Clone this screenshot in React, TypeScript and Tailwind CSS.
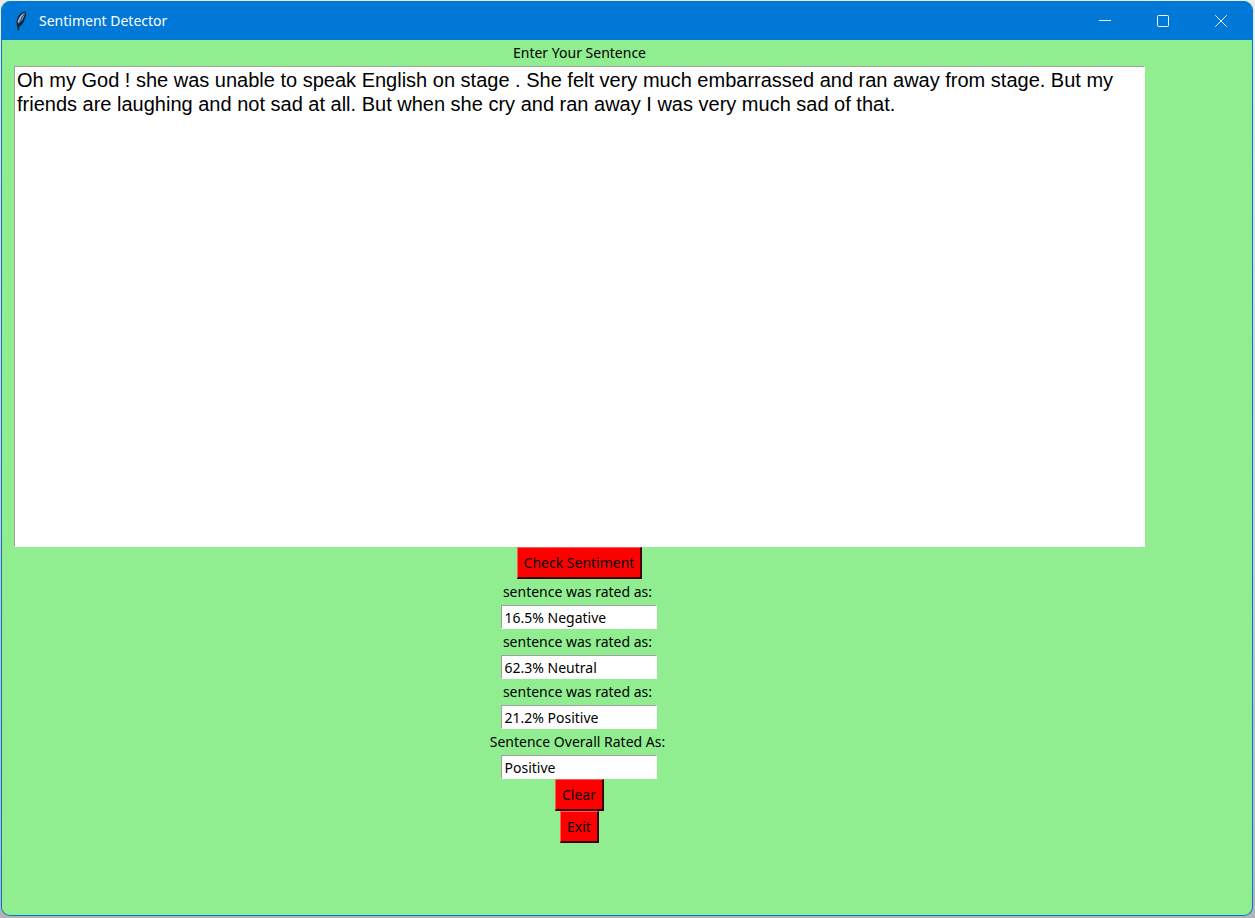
import { useState } from "react";
import type { InputHTMLAttributes, ButtonHTMLAttributes } from "react";

const SENTENCE =
  "Oh my God ! she was unable to speak English on stage . She felt very much embarrassed and ran away from stage. But my friends are laughing and not sad at all. But when she cry and ran away I was very much sad of that.";

function FeatherIcon() {
  return (
    <svg width="14" height="20" viewBox="0 0 14 20" aria-hidden="true">
      <path d="M11.500 0.300C7.500 1 4 4.500 3 8.500c-.6 2.400-.6 4.700.2 6.700L3.800 19.500h1.200l.4-3.800C8.300 14 9.800 11.500 10.300 9c1.400-2.500 2-6 1.200-8.700z" fill="#14202e" />
      <path d="M10.600 1.500C7 3.500 4.300 7 4 12.500c2-.8 3.700-2.300 4.700-4.300C10 6 10.800 4 10.600 1.500z" fill="#6f9fe0" />
      <path d="M10.200 3C8 6.500 5.600 10.500 4.500 17" stroke="#17304f" strokeWidth="0.8" fill="none" />
      <path d="M9 3C6.300 5 4.600 8 4.200 11.500" stroke="#c3d6ee" strokeWidth="0.8" fill="none" />
    </svg>
  );
}

function TitleBar() {
  const control = "flex h-full w-[58px] items-center justify-center";
  return (
    <header className="flex h-[39px] items-center bg-[#0078d7] pr-[2px] pl-3 text-white">
      <FeatherIcon />
      <h1 className="ml-[11px] flex-1 font-['Noto_Sans','Open_Sans',sans-serif] text-[14px]">Sentiment Detector</h1>
      <button type="button" aria-label="Minimize" className={control}>
        <svg width="12" height="12" viewBox="0 0 12 12" stroke="currentColor" fill="none">
          <path d="M0 5.500h12" />
        </svg>
      </button>
      <button type="button" aria-label="Maximize" className={control}>
        <svg width="12" height="12" viewBox="0 0 12 12" stroke="currentColor" fill="none">
          <rect x="0.500" y="0.500" width="11" height="11" rx="1" />
        </svg>
      </button>
      <button type="button" aria-label="Close" className={control}>
        <svg width="12" height="12" viewBox="0 0 12 12" stroke="currentColor" fill="none">
          <path d="M0.300 0.300l11.400 11.400M11.700 0.300L0.300 11.700" />
        </svg>
      </button>
    </header>
  );
}

const sunken =
  "border border-t-[#a0a0a0] border-l-[#a0a0a0] border-r-white border-b-white bg-white text-black outline-none";

type FieldProps = InputHTMLAttributes<HTMLInputElement> & { id: string; label: string };

function ResultField({ id, label, ...rest }: FieldProps) {
  return (
    <div className="flex flex-col items-center">
      <label htmlFor={id} className="h-[26px] pr-1 leading-[26px]">
        {label}
      </label>
      <input id={id} type="text" className={`h-6 w-[156px] pl-[2px] ${sunken}`} {...rest} />
    </div>
  );
}

function RaisedButton(props: ButtonHTMLAttributes<HTMLButtonElement>) {
  return (
    <button
      type="button"
      className="h-8 border border-r-2 border-b-2 border-t-[#ff5a5a] border-r-[#3a0000] border-b-[#3a0000] border-l-[#ff5a5a] bg-[#ff0000] px-[6px] text-black"
      {...props}
    />
  );
}

export default function App() {
  const [text, setText] = useState(SENTENCE);
  const [scores, setScores] = useState(["16.5% Negative", "62.3% Neutral", "21.2% Positive", "Positive"]);
  const labels = [
    "sentence was rated as:",
    "sentence was rated as:",
    "sentence was rated as:",
    "Sentence Overall Rated As:",
  ];

  const clear = () => {
    setText("");
    setScores(["", "", "", ""]);
  };

  return (
    <div className="flex min-h-screen flex-col bg-linear-to-b from-[#ececec] to-[#b4b4b4] pt-px pr-[2px] pb-[2px] pl-px">
      <div className="flex flex-1 flex-col overflow-hidden rounded-[9px] border border-t-0 border-[#0078d7] bg-[#90ee90]">
        <TitleBar />
        <main className="flex flex-col items-center pr-[107px] pl-3 font-['Noto_Sans','Open_Sans',sans-serif] text-[14px] text-black">
          <label htmlFor="sentence" className="h-[26px] leading-[26px]">
            Enter Your Sentence
          </label>
          <textarea
            id="sentence"
            spellCheck={false}
            value={text}
            onChange={(e) => setText(e.target.value)}
            className={`block h-[481px] w-full resize-none overflow-hidden px-[2px] pt-px font-['Liberation_Sans',Arial,sans-serif] text-[20px] leading-6 ${sunken}`}
          />
          <RaisedButton>Check Sentiment</RaisedButton>
          <div className="flex flex-col">
            {labels.map((label, i) => (
              <ResultField key={i} id={`score-${i}`} label={label} value={scores[i]} readOnly />
            ))}
          </div>
          <RaisedButton onClick={clear}>Clear</RaisedButton>
          <RaisedButton>Exit</RaisedButton>
        </main>
      </div>
    </div>
  );
}
